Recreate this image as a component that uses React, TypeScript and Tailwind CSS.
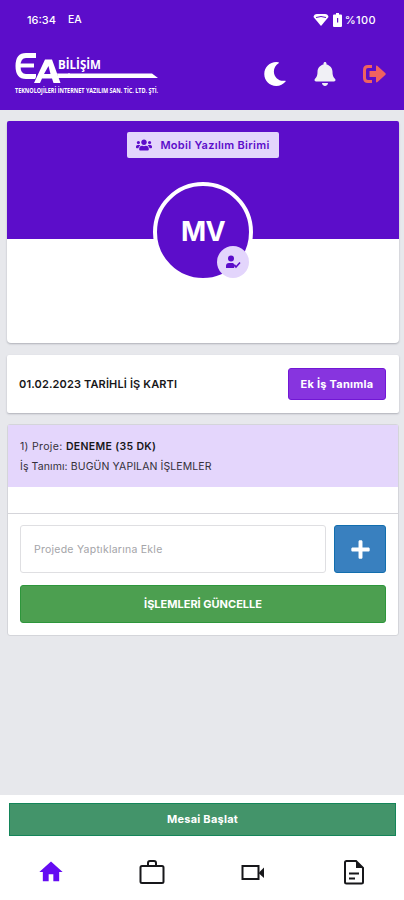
import { FaBell, FaMoon, FaPlus, FaUsers } from "react-icons/fa";
import { MdHome } from "react-icons/md";

function Logo() {
  return (
    <svg width="150" height="46" viewBox="0 0 150 46" fill="none" overflow="visible">
      {/* Monogram */}
      <path d="M22 4.500H12Q4 4.500 4 15Q4 25.500 12 25.500H22" stroke="white" strokeWidth="5" />
      <path d="M4 14.500H20" stroke="white" strokeWidth="4" />
      <path d="M54 22.500H138L144 27H54Z" fill="white" />
      <path
        d="M20 32L31 8.500H38L46.500 32H39.500L38 27.500H28L26 32ZM30 23H36.500L34.500 15Z"
        fill="white"
        stroke="#5c0dca"
        strokeWidth="1.500"
        paintOrder="stroke"
      />
      <path d="M43 22.500H56V27H44Z" fill="white" />
      <text x="44" y="18" textLength="43" lengthAdjust="spacingAndGlyphs" fill="white" fontSize="13" fontWeight="700" fontFamily="'Open Sans', sans-serif">
        BİLİŞİM
      </text>
      <text x="1" y="41.500" textLength="143" lengthAdjust="spacingAndGlyphs" fill="white" fontSize="7" fontWeight="700" fontFamily="'Open Sans', sans-serif">
        TEKNOLOJİLERİ İNTERNET YAZILIM SAN. TİC. LTD. ŞTİ.
      </text>
    </svg>
  );
}

function Header() {
  return (
    <header className="h-[110px] bg-[#5c0dca] text-white">
      <div className="flex h-10 items-center pl-[27px] pr-[28px] text-[11px] font-medium">
        <span>16:34</span>
        <span className="ml-[12px] text-[10.500px]">EA</span>
        <div className="ml-auto flex items-center">
          <svg width="16" height="14" viewBox="0 0 16 14">
            <path d="M0.500 4Q1 1 4 1H12Q15 1 15.500 4L8 13Z" fill="white" />
            <path d="M3 4.500Q8 2.500 13 4.500" fill="none" stroke="#5c0dca" strokeWidth="1" />
          </svg>
          <svg className="ml-[4px]" width="9" height="14" viewBox="0 0 9 14">
            <path d="M3 0H6V1.500H8Q9 1.500 9 2.500V13Q9 14 8 14H1Q0 14 0 13V2.500Q0 1.500 1 1.500H3Z" fill="white" />
            <path d="M4 5H5.200V9.500H4Z" fill="#5c0dca" />
          </svg>
          <span className="ml-[3px] tracking-[0.4px]">%100</span>
        </div>
      </div>
      <div className="flex h-[68px] items-center pl-[14px] pr-[18px]">
        <Logo />
        <div className="ml-auto flex items-center">
          <FaMoon size={24} />
          <FaBell size={24} className="ml-[26px] text-[#f0f0f5]" />
          {/* Sign out */}
          <svg className="ml-[26px]" width="23" height="20" viewBox="0 0 23 20" fill="none">
            <path d="M9 2.500H5Q1.500 2.500 1.500 6V14Q1.500 17.500 5 17.500H9" stroke="#ef6260" strokeWidth="3" />
            <path d="M6.500 7H13V2.500Q13 1 14.500 2L22.500 9.300Q23 10 22.500 10.700L14.500 18Q13 19 13 17.500V13H6.500Z" fill="#ef6260" />
          </svg>
        </div>
      </div>
    </header>
  );
}

function ProfileCard() {
  return (
    <section className="h-[222px] rounded-sm bg-white shadow-[0_1px_2px_#aeb0b8]">
      <div className="flex h-[118px] flex-col items-center rounded-t-xs bg-[#5c0dca] pt-[11px]">
        <div className="flex h-[26px] w-[152px] shrink-0 items-center justify-center gap-2 rounded-xs bg-[#e3d5fc] text-[#5c0dca]">
          <FaUsers size={16} />
          <span className="whitespace-nowrap text-[11px] font-semibold tracking-[0.3px]">Mobil Yazılım Birimi</span>
        </div>
        <div className="relative mt-6 flex size-[100px] shrink-0 items-center justify-center rounded-full border-4 border-white bg-[#5c0dca]">
          <span className="text-[27px] font-bold tracking-[-0.6px] text-white">MV</span>
          <div className="absolute right-0 bottom-0 flex size-8 items-center justify-center rounded-full bg-[#e3d5fc]">
            <svg width="16" height="14" viewBox="0 0 16 14" fill="#5c0dca">
              <circle cx="6" cy="3.500" r="3" />
              <path d="M1 13V11Q1 8 4 8H8L10 10L9 13Z" />
              <path d="M9.500 10L11 12L15 7.500" fill="none" stroke="#5c0dca" strokeWidth="1.600" />
            </svg>
          </div>
        </div>
      </div>
    </section>
  );
}

function DateCard() {
  return (
    <section className="mt-3 flex h-[58px] items-center justify-between rounded-xs bg-white pl-3 pr-[13px] shadow-[0_1px_2px_#aeb0b8]">
      <h2 className="text-[11px] font-semibold tracking-[0.14px] text-[#171719]">01.02.2023 TARİHLİ İŞ KARTI</h2>
      <button className="h-8 w-[98px] rounded-[3px] border border-[#7217d5] bg-[#8734df] text-[11px] font-bold tracking-[0.25px] text-white">
        Ek İş Tanımla
      </button>
    </section>
  );
}

function TaskCard() {
  return (
    <section className="mt-[11px] h-[212px] rounded-[3px] border border-[#d4d5da] bg-white">
      <div className="h-[62px] bg-[#e4d6fc] px-3 pt-[12px] text-[10.500px] leading-5 text-[#343039]">
        <p className="tracking-[0.34px]">
          1) Proje: <strong className="font-semibold text-[#171719]">DENEME (35 DK)</strong>
        </p>
        <p className="tracking-[0.1px]">İş Tanımı: BUGÜN YAPILAN İŞLEMLER</p>
      </div>
      <div className="h-[27px] border-b border-[#d5d5da]" />
      <div className="px-3 pt-[11px]">
        <div className="flex gap-2">
          <input
            className="h-12 w-[306px] rounded-[3px] border border-[#dfdfe2] px-[13px] text-[10.500px] tracking-[0.25px] placeholder:text-[#a4a4a8]"
            placeholder="Projede Yaptıklarına Ekle"
          />
          <button className="flex h-12 w-[52px] shrink-0 items-center justify-center rounded-[3px] border border-[#126eae] bg-[#3980bf] text-white">
            <FaPlus size={21} />
          </button>
        </div>
        <button className="mt-3 h-[38px] w-full rounded-[3px] border border-[#2d963b] bg-[#4c9f50] text-[11px] font-bold text-white">
          İŞLEMLERİ GÜNCELLE
        </button>
      </div>
    </section>
  );
}

function BottomBar() {
  return (
    <footer className="h-[105px] bg-white pt-2">
      <div className="px-[9px]">
        <button className="h-[33px] w-[387px] border border-[#148559] bg-[#43946a] text-[11px] font-bold tracking-[0.25px] text-white">
          Mesai Başlat
        </button>
      </div>
      <nav className="grid h-[63px] grid-cols-4 place-items-center pt-[9px]">
        <MdHome size={28} className="text-[#650cf2]" />
        <svg width="26" height="26" viewBox="0 0 26 26" fill="none" stroke="#17171a" strokeWidth="2">
          <rect x="1.500" y="7" width="23" height="17" rx="1.500" />
          <path d="M9 7V4Q9 2 11 2H15Q17 2 17 4V7" />
        </svg>
        <svg width="24" height="26" viewBox="0 0 24 26">
          <path d="M1.500 7H17.500V20H1.500Z" fill="none" stroke="#17171a" strokeWidth="2" />
          <path d="M18 13.500L23 8.500V19L18 14.500Z" fill="#17171a" />
        </svg>
        <svg width="22" height="26" viewBox="0 0 22 26" fill="none" stroke="#17171a" strokeWidth="2">
          <path d="M3 2H13L20 9V23Q20 24.500 18.500 24.500H3.500Q2 24.500 2 23V3.500Q2 2 3.500 2" />
          <path d="M13 2V9H20Z" fill="#17171a" stroke="none" />
          <path d="M6 14.500H16M6 19.500H12" />
        </svg>
      </nav>
    </footer>
  );
}

export default function App() {
  return (
    <div className="flex h-[900px] w-[404px] flex-col overflow-hidden bg-[#e7e8ec] font-['Inter','Noto_Sans',sans-serif]">
      <Header />
      <main className="flex-1 pl-[7px] pr-[5px] pt-[11px]">
        <ProfileCard />
        <DateCard />
        <TaskCard />
      </main>
      <BottomBar />
    </div>
  );
}
